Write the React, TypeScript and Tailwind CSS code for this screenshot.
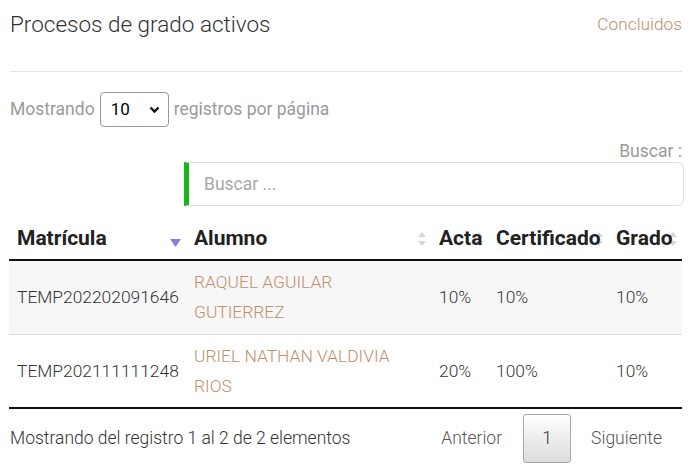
import React from 'react';

const SortBoth = () => (
    <svg width="8" height="14" viewBox="0 0 8 14" className="absolute right-[5px] top-[14px]">
        <path d="M4 0 L8 5 L0 5 Z" fill="#d6d6d6" />
        <path d="M4 14 L8 9 L0 9 Z" fill="#d6d6d6" />
    </svg>
);

const SortDesc = () => (
    <svg width="11" height="8" viewBox="0 0 11 8" className="absolute right-[5px] top-[21px]">
        <path d="M0 0 L11 0 L5.5 8 Z" fill="#8181de" />
    </svg>
);

const rows = [
    { matricula: 'TEMP202202091646', alumno: ['RAQUEL AGUILAR', 'GUTIERREZ'], acta: '10%', cert: '10%', grado: '10%' },
    { matricula: 'TEMP202111111248', alumno: ['URIEL NATHAN VALDIVIA', 'RIOS'], acta: '20%', cert: '100%', grado: '10%' },
];

const App: React.FC = () => {
    return (
        <div className="w-[697px] h-[469px] bg-white overflow-hidden pl-[10px] pr-[15px] font-['Roboto',sans-serif] font-light text-[#333]">
            <div className="flex items-start justify-between pt-[10px] pb-[33px] border-b border-[#e5e5e5]">
                <h1 className="text-[22.5px] leading-[28px] font-light text-[#333]">Procesos de grado activos</h1>
                <a className="text-[17.3px] leading-[28px] font-light text-[#c0906a] cursor-pointer">Concluidos</a>
            </div>

            <div className="flex items-center mt-[20px] text-[17.5px] text-[#9a9a9a] font-normal">
                <span>Mostrando</span>
                <div className="mx-[5px] w-[69px] h-[35px] border border-[#9a9a9a] rounded-[4px] flex items-center justify-between pl-[10px] pr-[8px] text-black">
                    <span className="text-[17px]">10</span>
                    <svg width="11" height="8" viewBox="0 0 11 8">
                        <path d="M1.5 1.5 L5.5 5.5 L9.5 1.5" stroke="#111" strokeWidth="2.4" fill="none" />
                    </svg>
                </div>
                <span>registros por página</span>
            </div>

            <div className="text-right text-[17.5px] text-[#9a9a9a] font-normal mt-[13px] leading-[22px]">Buscar :</div>
            <div className="flex justify-end -mr-[2px]">
                <div className="w-[500px] h-[44px] border border-[#e0e0e0] border-l-[5px] border-l-[#1bb31b] rounded-r-[6px] flex items-center pl-[15px] text-[17.5px] font-normal text-[#a8a8a8]">
                    Buscar ...
                </div>
            </div>

            <table className="w-[673px] -ml-[1px] mt-[12px] border-collapse table-fixed">
                <colgroup>
                    <col className="w-[177px]" />
                    <col className="w-[245px]" />
                    <col className="w-[57px]" />
                    <col className="w-[120px]" />
                    <col className="w-[74px]" />
                </colgroup>
                <thead>
                    <tr className="border-b-2 border-[#111]">
                        <th className="relative text-left font-bold text-[21px] text-[#222] pl-[8px] h-[42px]">Matrícula<SortDesc /></th>
                        <th className="relative text-left font-bold text-[21px] text-[#222] pl-[8px]">Alumno<SortBoth /></th>
                        <th className="relative text-left font-bold text-[21px] text-[#222] pl-[8px]"><SortBoth /><span className="relative">Acta</span></th>
                        <th className="relative text-left font-bold text-[21px] text-[#222] pl-[8px] whitespace-nowrap"><SortBoth /><span className="relative">Certificado</span></th>
                        <th className="relative text-left font-bold text-[21px] text-[#222] pl-[8px]"><SortBoth /><span className="relative">Grado</span></th>
                    </tr>
                </thead>
                <tbody className="text-[17.4px] text-[#333]">
                    {rows.map((r, i) => (
                        <tr key={r.matricula} className={i === 0 ? 'bg-[#f7f7f7] border-b border-[#dddddd]' : 'border-b-2 border-[#111]'}>
                            <td className="pl-[8px] h-[74px] leading-[30px]">{r.matricula}</td>
                            <td className="pl-[8px] leading-[30px] text-[#c0906a]">
                                {r.alumno[0]}<br />{r.alumno[1]}
                            </td>
                            <td className="pl-[8px]">{r.acta}</td>
                            <td className="pl-[8px]">{r.cert}</td>
                            <td className="pl-[8px]">{r.grado}</td>
                        </tr>
                    ))}
                </tbody>
            </table>

            <div className="flex items-center justify-between mt-[5px] text-[17.5px]">
                <span className="text-[#333]">Mostrando del registro 1 al 2 de 2 elementos</span>
                <div className="flex items-center mr-[20px]">
                    <span className="text-[#555] mr-[21px]">Anterior</span>
                    <div className="w-[48px] h-[49px] border border-[#a8a8a8] rounded-[3px] bg-gradient-to-b from-white to-[#dcdcdc] flex items-center justify-center text-[#333]">1</div>
                    <span className="text-[#555] ml-[20px]">Siguiente</span>
                </div>
            </div>
        </div>
    );
};

export default App;
